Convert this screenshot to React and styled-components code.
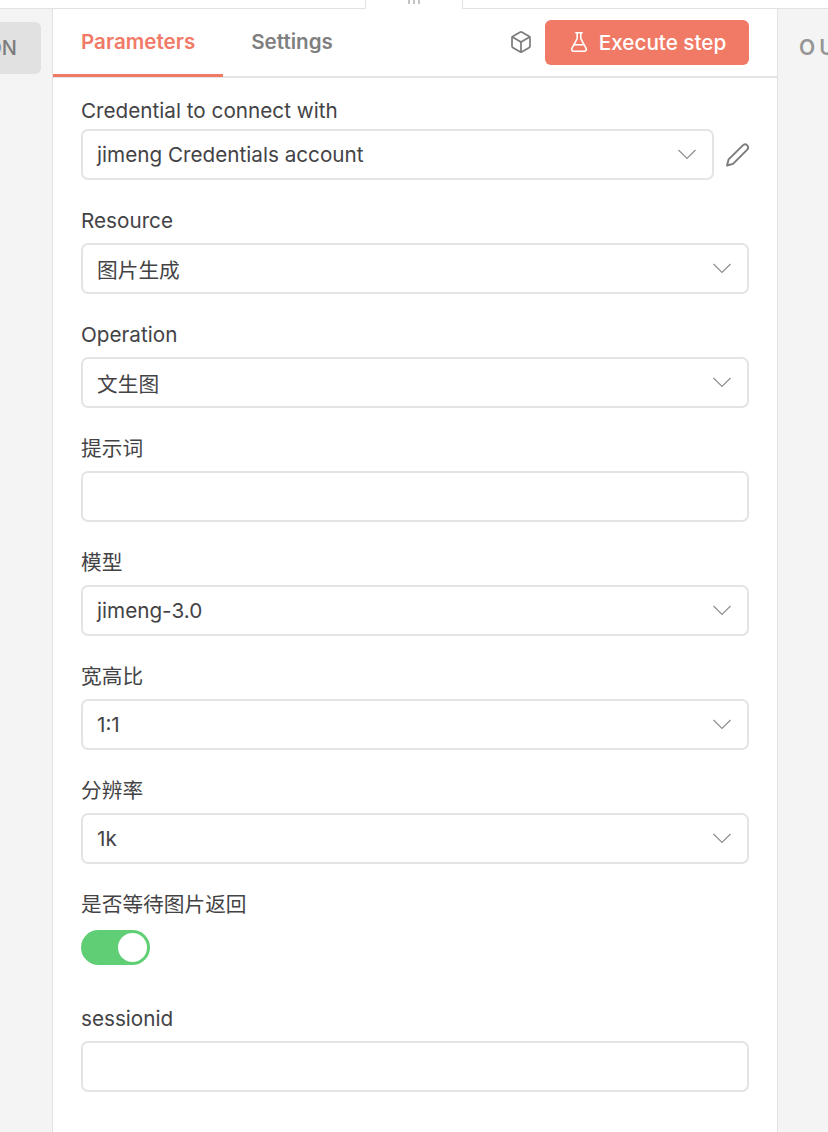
import React from "react";
import styled, { createGlobalStyle } from "styled-components";
import { FlaskConical, Box } from "lucide-react";

const Global = createGlobalStyle`
  html, body {
    margin: 0;
    padding: 0;
    height: 100%;
    background: #ffffff;
    overflow: hidden;
  }
  body {
    font-family: Inter, "Noto Sans CJK SC", sans-serif;
    color: #3c3c3f;
  }
`;

const Page = styled.div`
  width: 828px;
  height: 1132px;
  display: flex;
  flex-direction: column;
  overflow: hidden;
`;

const TopStrip = styled.div`
  height: 8px;
  flex: none;
  display: flex;
  justify-content: center;
  background: #fff;
  border-bottom: 1px solid #e2e2e2;
`;

const Handle = styled.div`
  width: 98px;
  height: 9px;
  box-sizing: border-box;
  display: flex;
  justify-content: center;
  gap: 3px;
  background: #fff;
  border-left: 1px solid #e2e2e2;
  border-right: 1px solid #e2e2e2;
`;

const Grip = styled.span`
  width: 2px;
  height: 4px;
  background: #c4c4c4;
`;

const Main = styled.div`
  flex: 1;
  display: flex;
  min-height: 0;
`;

const SideLeft = styled.div`
  width: 52px;
  flex: none;
  background: #f4f4f4;
  padding-top: 13px;
`;

const BackButton = styled.div`
  width: 41px;
  height: 52px;
  box-sizing: border-box;
  display: flex;
  align-items: center;
  justify-content: flex-end;
  padding-right: 24px;
  background: #e1e1e1;
  border-radius: 0 6px 6px 0;
  color: #7c7c7c;
  font-size: 20px;
  font-weight: 500;
  white-space: nowrap;
`;

const Panel = styled.div`
  width: 726px;
  flex: none;
  box-sizing: border-box;
  background: #fff;
  border-left: 1px solid #e2e2e2;
  border-right: 1px solid #e2e2e2;
`;

const SideRight = styled.div`
  flex: 1;
  background: #f4f4f4;
  padding: 26px 0 0 21px;
  color: #969696;
  font-size: 21px;
  font-weight: 600;
  letter-spacing: 4px;
  white-space: nowrap;
  overflow: hidden;
`;

const TabBar = styled.div`
  height: 69px;
  box-sizing: border-box;
  display: flex;
  align-items: stretch;
  border-bottom: 2px solid #e4e4e4;
  padding-right: 28px;
`;

const Tab = styled.div`
  height: 68px;
  box-sizing: border-box;
  padding: 18px 28px 0;
  font-size: 20.6px;
  font-weight: 600;
  line-height: 30px;
  color: ${(p) => (p.$active ? "#f07a66" : "#7f7f7f")};
  border-bottom: 3px solid ${(p) => (p.$active ? "#f07a66" : "transparent")};
`;

const TabActions = styled.div`
  margin-left: auto;
  display: flex;
  align-items: center;
  gap: 12px;
  padding-bottom: 1px;
  color: #7b7b7b;
`;

const ExecuteButton = styled.div`
  width: 204px;
  height: 45px;
  display: flex;
  align-items: center;
  justify-content: center;
  gap: 9px;
  border-radius: 6px;
  background: #f07a66;
  color: #fff;
  font-size: 20.7px;
  font-weight: 500;
`;

const Form = styled.div`
  padding: 19px 28px 0;
  display: flex;
  flex-direction: column;
`;

const Field = styled.div`
  display: flex;
  flex-direction: column;
  gap: ${(p) => p.$gap || 8}px;
  margin-bottom: 27px;
`;

const Label = styled.div`
  font-size: 20.7px;
  line-height: 28px;
  color: #434346;
`;

const Row = styled.div`
  display: flex;
  align-items: center;
  gap: 11px;
`;

const Select = styled.div`
  flex: 1 0 auto;
  height: 51px;
  box-sizing: border-box;
  display: flex;
  align-items: center;
  justify-content: space-between;
  padding: 0 16px 0 14px;
  background: #fff;
  border: 2px solid #e4e4e4;
  border-radius: 7px;
  font-size: 20.7px;
  color: #434346;
`;

const Toggle = styled.div`
  width: 69px;
  height: 35px;
  box-sizing: border-box;
  margin: 3px 0 13px;
  padding: 3px;
  display: flex;
  justify-content: flex-end;
  border-radius: 18px;
  background: #5fce74;
`;

const Knob = styled.div`
  width: 29px;
  height: 29px;
  border-radius: 50%;
  background: #fff;
`;

const Caret = () => (
  <svg width="18" height="11" viewBox="0 0 18 11" fill="none">
    <path d="M0.5 1 9 9.5 17.5 1" stroke="#8f8f8f" strokeWidth="1.2" />
  </svg>
);

const PencilIcon = () => (
  <svg width="24" height="24" viewBox="0 0 24 24" fill="none">
    <path
      d="M2 22.5 3.6 16.4 17.6 2.6C19 1.2 21 1.2 22.2 2.4 23.4 3.7 23.3 5.5 22 6.8L8 20.8Z"
      stroke="#7b7b7b"
      strokeWidth="1.9"
      strokeLinejoin="round"
    />
  </svg>
);

const fields = [
  { label: "Resource", value: "图片生成", caret: true },
  { label: "Operation", value: "文生图", caret: true },
  { label: "提示词" },
  { label: "模型", value: "jimeng-3.0", caret: true },
  { label: "宽高比", value: "1:1", caret: true },
  { label: "分辨率", value: "1k", caret: true },
];

export default function App() {
  return (
    <Page>
      <Global />
      <TopStrip>
        <Handle>
          <Grip />
          <Grip />
          <Grip />
        </Handle>
      </TopStrip>
      <Main>
        <SideLeft>
          <BackButton>ON</BackButton>
        </SideLeft>
        <Panel>
          <TabBar>
            <Tab $active>Parameters</Tab>
            <Tab>Settings</Tab>
            <TabActions>
              <Box size={24} strokeWidth={1.7} />
              <ExecuteButton>
                <FlaskConical size={22} strokeWidth={1.7} />
                Execute step
              </ExecuteButton>
            </TabActions>
          </TabBar>
          <Form>
            <Field $gap={4}>
              <Label>Credential to connect with</Label>
              <Row>
                <Select>
                  jimeng Credentials account
                  <Caret />
                </Select>
                <PencilIcon />
              </Row>
            </Field>
            {fields.map((f) => (
              <Field key={f.label}>
                <Label>{f.label}</Label>
                <Select>
                  {f.value}
                  {f.caret && <Caret />}
                </Select>
              </Field>
            ))}
            <Field>
              <Label>是否等待图片返回</Label>
              <Toggle>
                <Knob />
              </Toggle>
            </Field>
            <Field>
              <Label>sessionid</Label>
              <Select />
            </Field>
          </Form>
        </Panel>
        <SideRight>OUTPUT</SideRight>
      </Main>
    </Page>
  );
}
